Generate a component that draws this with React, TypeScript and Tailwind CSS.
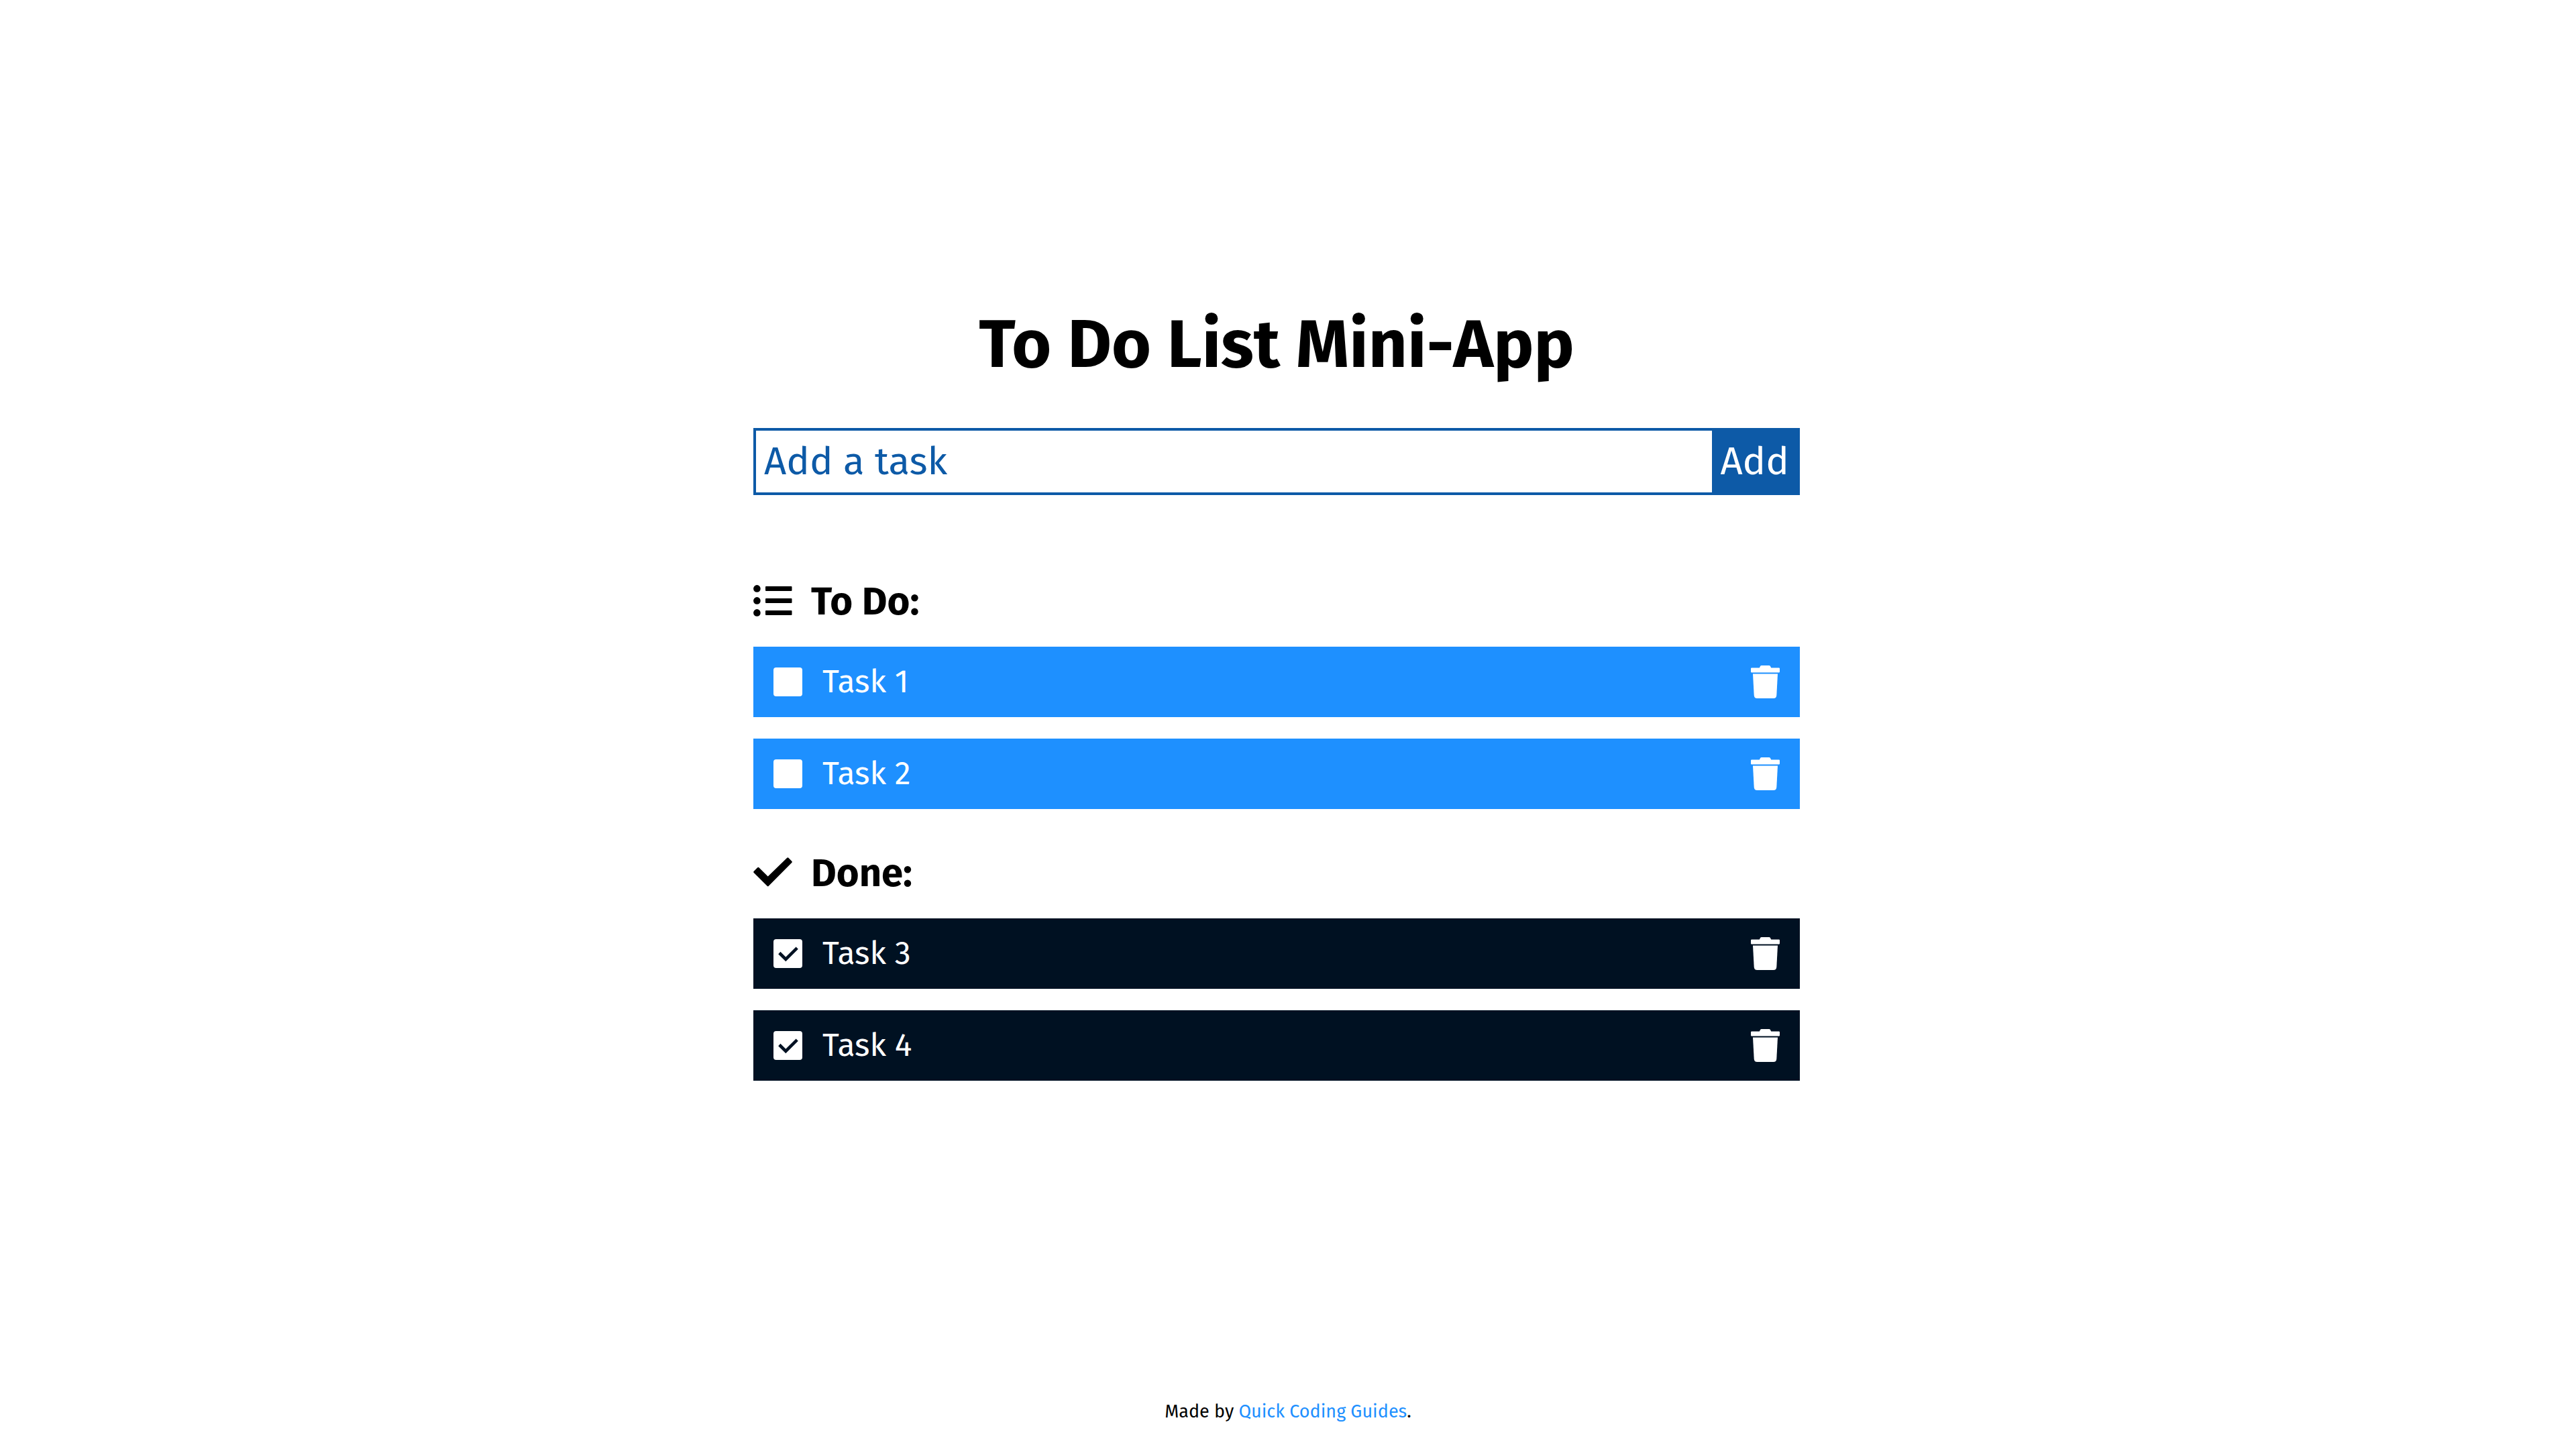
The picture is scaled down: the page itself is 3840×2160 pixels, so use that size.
import { useState, type FormEvent } from "react";

type Task = { id: number; name: string; done: boolean };

const initialTasks: Task[] = [
  { id: 1, name: "Task 1", done: false },
  { id: 2, name: "Task 2", done: false },
  { id: 3, name: "Task 3", done: true },
  { id: 4, name: "Task 4", done: true },
];

function ListIcon() {
  return (
    <svg viewBox="0 0 58 47" aria-hidden="true" className="mb-1 w-[58px] fill-current">
      <circle cx="5.4" cy="5.4" r="5.3" />
      <circle cx="5.4" cy="23.4" r="5.3" />
      <circle cx="5.4" cy="41.4" r="5.3" />
      <rect x="18" y="1.9" width="39.5" height="7" rx="1" />
      <rect x="18" y="19.9" width="39.5" height="7" rx="1" />
      <rect x="18" y="37.9" width="39.5" height="7" rx="1" />
    </svg>
  );
}

function CheckIcon() {
  return (
    <svg viewBox="0 0 58 44" aria-hidden="true" className="mb-1 w-[58px] fill-current">
      <path
        d="M1.8 21.9 L7.3 16.4 L21.7 30.6 L51.3 1.8 L56.2 6.9 L21.7 41.6 Z"
        stroke="currentColor"
        strokeWidth="3"
        strokeLinejoin="round"
      />
    </svg>
  );
}

function TrashIcon() {
  return (
    <svg viewBox="0 0 43 49" aria-hidden="true" className="w-[43px] fill-current">
      <path d="M1.2 3.5 H12.8 L13.8 1.4 Q14.5 0 16 0 H27 Q28.5 0 29.2 1.4 L30.2 3.5 H41.8 Q43 3.5 43 4.7 V9.3 Q43 10.5 41.8 10.5 H1.2 Q0 10.5 0 9.3 V4.7 Q0 3.5 1.2 3.5 Z" />
      <path d="M3 12.6 H40 L38.3 44.5 Q38 49 33.6 49 H9.4 Q5 49 4.7 44.5 Z" />
    </svg>
  );
}

type RowProps = { task: Task; onToggle: () => void; onRemove: () => void };

function TaskRow({ task, onToggle, onRemove }: RowProps) {
  return (
    <li
      className={`flex items-center justify-between px-[30px] py-6 text-white ${
        task.done ? "bg-[#001122]" : "bg-[#1e90ff]"
      }`}
    >
      <label className="flex items-center gap-[30px] text-[48px] leading-[57px]">
        <span className="relative block size-[43px]">
          <input
            type="checkbox"
            checked={task.done}
            onChange={onToggle}
            className="block size-full appearance-none rounded-[4px] bg-white"
          />
          {task.done && (
            <svg
              viewBox="0 0 43 43"
              aria-hidden="true"
              className="pointer-events-none absolute inset-0 fill-none stroke-[#001122]"
            >
              <path d="M8.8 20.5 L18.3 30 L35.2 13.1" strokeWidth="4.6" />
            </svg>
          )}
        </span>
        {task.name}
      </label>
      <button type="button" aria-label={`Delete ${task.name}`} onClick={onRemove}>
        <TrashIcon />
      </button>
    </li>
  );
}

export default function App() {
  const [tasks, setTasks] = useState(initialTasks);
  const [draft, setDraft] = useState("");

  const addTask = (event: FormEvent) => {
    event.preventDefault();
    if (!draft.trim()) return;
    setTasks([...tasks, { id: Date.now(), name: draft.trim(), done: false }]);
    setDraft("");
  };

  const rows = (done: boolean) => (
    <ul className="flex flex-col gap-8">
      {tasks
        .filter((task) => task.done === done)
        .map((task) => (
          <TaskRow
            key={task.id}
            task={task}
            onToggle={() =>
              setTasks(tasks.map((t) => (t.id === task.id ? { ...t, done: !t.done } : t)))
            }
            onRemove={() => setTasks(tasks.filter((t) => t.id !== task.id))}
          />
        ))}
    </ul>
  );

  return (
    <div className="flex min-h-screen flex-col bg-white font-['Fira_Sans','Noto_Sans',sans-serif] text-black">
      <main className="flex flex-1 flex-col items-center pt-[453px] pr-[34px]">
        <div className="w-full max-w-[1560px]">
          <h1 className="text-center text-[101px] leading-[121px] font-bold">To Do List Mini-App</h1>
          <form
            onSubmit={addTask}
            className="mt-16 flex border-4 border-[#0d5aa7] text-[58px] leading-[92px]"
          >
            <input
              type="text"
              aria-label="Add a task"
              placeholder="Add a task"
              value={draft}
              onChange={(event) => setDraft(event.target.value)}
              className="h-[92px] min-w-0 flex-1 px-3 outline-none placeholder:text-[#0d5aa7]"
            />
            <button type="submit" className="bg-[#0d5aa7] px-3 text-white">
              Add
            </button>
          </form>
          <section className="mt-[124px]">
            <h2 className="mb-8 flex items-center gap-7 text-[58px] leading-[70px] font-bold">
              <ListIcon />
              To Do:
            </h2>
            {rows(false)}
          </section>
          <section className="mt-[61px]">
            <h2 className="mb-8 flex items-center gap-7 text-[58px] leading-[70px] font-bold">
              <CheckIcon />
              Done:
            </h2>
            {rows(true)}
          </section>
        </div>
      </main>
      <footer className="pb-10 text-center text-[27px] leading-8">
        Made by{" "}
        <a href="#" className="text-[#1e90ff]">
          Quick Coding Guides
        </a>
        .
      </footer>
    </div>
  );
}
